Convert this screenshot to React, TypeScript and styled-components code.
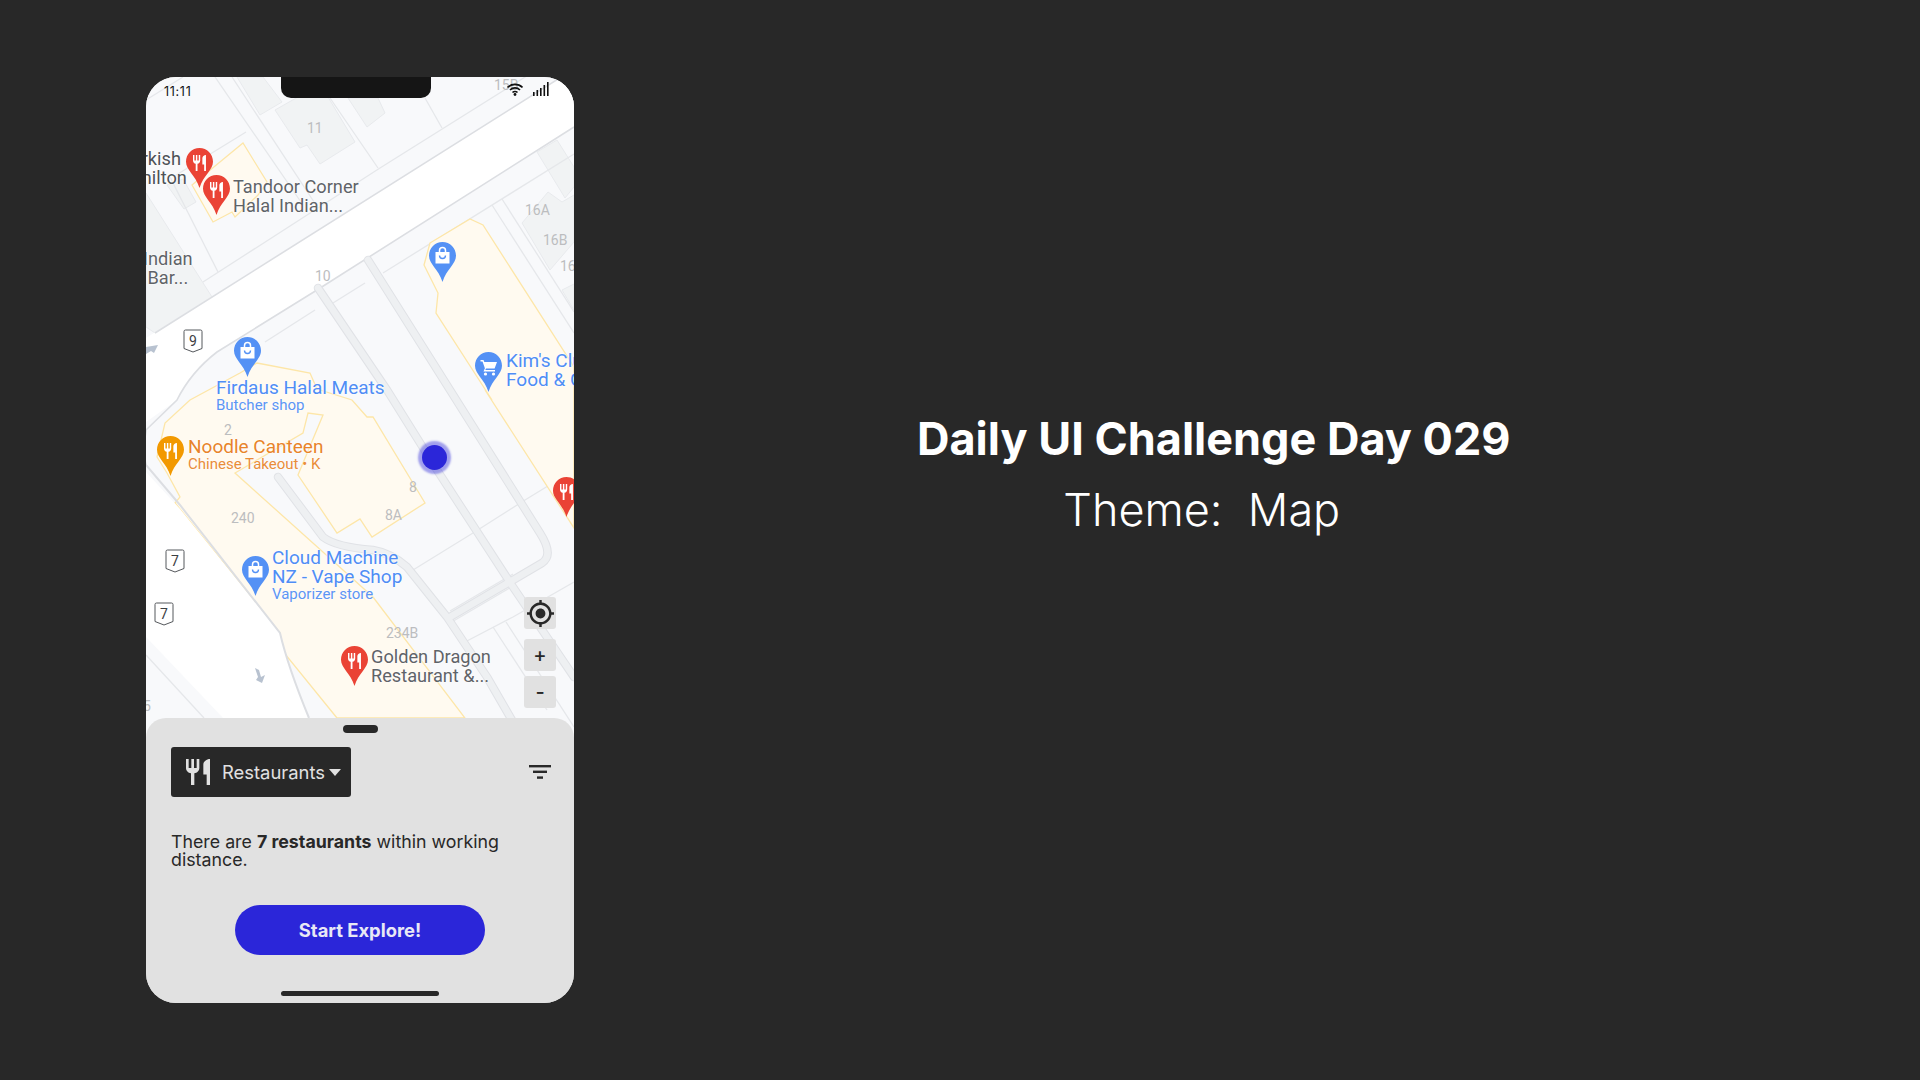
import React from 'react';
import styled, { createGlobalStyle } from 'styled-components';

const GlobalStyle = createGlobalStyle`
  html, body {
    margin: 0;
    padding: 0;
    background: #282828;
  }
`;

const Stage = styled.div`
  display: flex;
  align-items: flex-start;
  width: 1920px;
  height: 1080px;
  overflow: hidden;
  background: #282828;
`;

const Phone = styled.div`
  position: relative;
  display: flex;
  flex-direction: column;
  flex: none;
  width: 428px;
  height: 926px;
  margin: 77px 0 0 146px;
  border-radius: 30px;
  overflow: hidden;
  background: #e1e1e1;
`;

const MapArea = styled.div`
  position: relative;
  width: 428px;
  height: 660px;
  margin-bottom: -19px;
  overflow: hidden;
  background: #f8f9fb;
`;

const MapLayer = styled.svg`
  display: block;
`;

const Notch = styled.div`
  position: absolute;
  top: 0;
  left: 135px;
  width: 150px;
  height: 21px;
  border-radius: 0 0 10px 10px;
  background: #151515;
`;

const StatusTime = styled.span`
  position: absolute;
  top: 7px;
  left: 18px;
  font: 400 12.5px/15px 'Inter', sans-serif;
  letter-spacing: 0.7px;
  color: #111;
`;

const StatusIcons = styled.div`
  position: absolute;
  top: 5px;
  right: 24px;
  display: flex;
  align-items: flex-end;
  gap: 10px;
`;

const Label = styled.div<{ $x: number; $y: number; $color: string; $size?: number }>`
  position: absolute;
  left: ${(p) => p.$x}px;
  top: ${(p) => p.$y}px;
  font: 400 ${(p) => p.$size ?? 18.2}px/19px 'Roboto', sans-serif;
  color: ${(p) => p.$color};
  white-space: pre;
  text-shadow: 0 0 2px #fff, 0 0 2px #fff;
`;

const SubLabel = styled.div`
  margin-top: 1px;
  font-size: 15px;
  line-height: 15px;
  opacity: 0.92;
`;

const Num = styled.span<{ $x: number; $y: number }>`
  position: absolute;
  left: ${(p) => p.$x}px;
  top: ${(p) => p.$y}px;
  font: 400 14px/15px 'Roboto', sans-serif;
  color: #bcbdbf;
`;

const PinBox = styled.svg<{ $x: number; $y: number }>`
  position: absolute;
  left: ${(p) => p.$x}px;
  top: ${(p) => p.$y}px;
`;

const Dot = styled.div`
  position: absolute;
  left: 275.5px;
  top: 367.5px;
  width: 25px;
  height: 25px;
  border-radius: 50%;
  background: #2b26d9;
  box-shadow: 0 0 2px 4px rgba(43, 38, 217, 0.42);
`;

const Controls = styled.div`
  position: absolute;
  right: 18px;
  top: 520px;
  display: flex;
  flex-direction: column;
  width: 32px;
`;

const ControlButton = styled.div<{ $gap?: number }>`
  display: flex;
  align-items: center;
  justify-content: center;
  width: 32px;
  height: 32px;
  margin-top: ${(p) => p.$gap ?? 0}px;
  border-radius: 3px;
  background: #e1e1e1;
  font: 500 20px/1 'Inter', sans-serif;
  color: #282828;
`;

const Sheet = styled.div`
  position: relative;
  display: flex;
  flex-direction: column;
  height: 285px;
  padding: 7px 25px 0;
  box-sizing: border-box;
  border-radius: 20px 20px 0 0;
  background: #e1e1e1;
`;

const Handle = styled.div`
  align-self: center;
  width: 35px;
  height: 8px;
  border-radius: 4px;
  background: #282828;
`;

const FilterRow = styled.div`
  display: flex;
  align-items: center;
  justify-content: space-between;
  margin: 14px -2px 0 0;
`;

const Dropdown = styled.div`
  display: flex;
  align-items: center;
  width: 180px;
  height: 50px;
  padding-left: 15px;
  box-sizing: border-box;
  border-radius: 3px;
  background: #282828;
  color: #e1e1e1;
  font: 400 18.4px/20px 'Inter', sans-serif;
`;

const DropdownText = styled.span`
  margin-left: 12px;
`;

const Caret = styled.span`
  width: 0;
  height: 0;
  margin-left: 4px;
  border-left: 6px solid transparent;
  border-right: 6px solid transparent;
  border-top: 7px solid #e1e1e1;
`;

const Summary = styled.p`
  margin: 36px 0 0;
  font: 400 17.8px/18px 'Inter', sans-serif;
  color: #282828;
  b {
    font-weight: 700;
  }
`;

const Explore = styled.button`
  align-self: center;
  width: 250px;
  height: 50px;
  margin-top: 36px;
  border: 0;
  border-radius: 25px;
  background: #2b26d9;
  color: #e8e8f5;
  font: 700 18.4px/20px 'Inter', sans-serif;
`;

const HomeBar = styled.div`
  align-self: center;
  width: 158px;
  height: 5px;
  margin-top: 36px;
  border-radius: 3px;
  background: #282828;
`;

const Intro = styled.div`
  display: flex;
  flex-direction: column;
  align-items: center;
  margin: 409px 0 0 343px;
  color: #fff;
`;

const Title = styled.h1`
  margin: 0;
  font: 700 45px/60px 'Inter', sans-serif;
  white-space: nowrap;
`;

const Theme = styled.h2`
  margin: 11px 24px 0 0;
  font: 300 45px/60px 'Inter', sans-serif;
  white-space: pre;
`;

const PIN_PATH = 'M13.5 0C6 0 0 6 0 13.7C0 22 9.5 27 13.5 40C17.5 27 27 22 27 13.7C27 6 21 0 13.5 0Z';
const FORK_PATH = 'M11 9H9V2H7v7H5V2H3v7c0 2.12 1.66 3.84 3.75 3.97V22h2.5v-9.03C11.34 12.84 13 11.12 13 9V2h-2v7zm5-3v8h2.5v8H21V2c-2.76 0-5 2.24-5 4z';
const LOCATE_PATH = 'M12 8c-2.21 0-4 1.79-4 4s1.79 4 4 4 4-1.79 4-4-1.79-4-4-4zm8.94 3c-.46-4.17-3.77-7.48-7.94-7.94V1h-2v2.06C6.83 3.52 3.52 6.83 3.06 11H1v2h2.06c.46 4.17 3.77 7.48 7.94 7.94V23h2v-2.06c4.17-.46 7.48-3.77 7.94-7.94H23v-2h-2.06zM12 19c-3.87 0-7-3.13-7-7s3.13-7 7-7 7 3.13 7 7-3.13 7-7 7z';
const ROAD_PATH = 'M172,211 L241,313 L291,393 L367,510 L428,600 M222,183 L304,313 L394,456 Q408,478 396,486 L304,540 M132,400 L177,460 Q190,470 227,473 Q245,476 261,490 L301,540 L341,600 L367,645';

const RED = '#ea4335';
const BLUE = '#5491f5';
const ORANGE = '#f29900';
const LINK = '#4f8df5';

type PinKind = 'food' | 'bag' | 'cart';

const Pin = ({ x, y, color, kind }: { x: number; y: number; color: string; kind: PinKind }) => (
  <PinBox $x={x} $y={y} width="27" height="40" viewBox="0 0 27 40">
    <path d={PIN_PATH} fill={color} />
    {kind === 'food' && <path d={FORK_PATH} fill="#fff" transform="translate(4.84 5.4) scale(0.72 0.8)" />}
    {kind === 'bag' && (
      <g>
        <rect x="6.5" y="10" width="14" height="11.5" fill="#fff" />
        <path d="M10.5 10V8.5a3 3 0 0 1 6 0V10" fill="none" stroke="#fff" strokeWidth="1.5" />
        <path d="M10.5 13.5a3 3 0 0 0 6 0" fill="none" stroke={color} strokeWidth="1.4" />
      </g>
    )}
    {kind === 'cart' && (
      <g fill="#fff">
        <path d="M5.5 8h3l.8 2H22l-2.4 6.5H11l-.7 1.5H20v1.6H8.5l1.4-3.4L7.5 9.6h-2z" />
        <circle cx="10.5" cy="22" r="1.6" />
        <circle cx="18.5" cy="22" r="1.6" />
      </g>
    )}
  </PinBox>
);

const Shield = ({ x, y, value }: { x: number; y: number; value: string }) => (
  <PinBox $x={x} $y={y} width="20" height="24" viewBox="0 0 20 24">
    <path d="M2.5 1H17.5Q19 1 19 2.5V19.5L10 23L1 19.5V2.5Q1 1 2.5 1Z" fill="#fff" stroke="#55585c" strokeWidth="1" />
    <text x="10" y="16.5" textAnchor="middle" fontFamily="Roboto, sans-serif" fontSize="14" fill="#3c4043">{value}</text>
  </PinBox>
);

const BUILDINGS = [
  '0,116 66,220 9,256 0,250',
  '91,0 114,38 136,25 117,0',
  '129,33 154,71 161,68 174,87 209,65 182,20 159,16',
  '202,21 221,50 239,36 232,21',
  '376,146 402,115 416,125 428,118 428,165 404,193',
  '416,213 428,207 428,233',
  '21,108 38,132 50,125 37,102',
  '391,75 411,63 428,90 428,110 419,121',
];

const SHOPS = [
  '46,108 97,66 121,105 112,118 89,140 86,135 67,145',
  '284,166 324,142 337,148 428,290 428,451 339,313 346,323 290,236 292,216 278,188',
  '111,286 164,296 171,312 206,323 221,340 227,340 279,426 226,460 214,442 191,456 152,398 177,338 162,336 157,356 89,396 227,520 319,641 191,641 126,561 134,556 29,426 34,420 21,396 11,380 19,346 44,323 94,296',
];

const THIN_LINES = [
  '69,0 157,128',
  '86,0 170,128',
  '0,23 37,0',
  '100,55 27,100',
  '24,100 72,195',
  '57,205 234,91 403,-15',
  '346,128 428,256',
  '356,122 428,235',
  '267,493 327,456 379,423 428,393',
  '304,534 367,497',
  '304,546 367,509',
  '319,565 367,540 428,505',
  '347,550 401,633',
  '360,545 428,650',
  '0,560 77,641',
  '18,640 44,620',
  '279,21 296,51',
  '184,21 232,91',
  '428,77 237,196',
  '219,206 187,226',
  '169,233 119,265',
];

const App: React.FC = () => (
  <Stage>
    <GlobalStyle />
    <Phone>
      <MapArea>
        <MapLayer width="428" height="660" viewBox="0 0 428 660">
          {BUILDINGS.map((b) => <polygon key={b} points={b} fill="#f1f3f4" stroke="#e8eaed" />)}
          {THIN_LINES.map((l) => <polyline key={l} points={l} fill="none" stroke="#e5e7ea" strokeWidth="1.3" />)}
          {SHOPS.map((s) => <polygon key={s} points={s} fill="#fffaf0" stroke="#fde6a8" strokeWidth="1.3" />)}
          <path d="M428,-8 L0,261 V345 L31,323 Q45,295 71,275 L171,213 L428,50Z" fill="#fff" />
          <path d="M428,-8 L9,256 M428,50 L171,213 L71,275 Q45,295 31,323 L0,353" fill="none" stroke="#dcdee2" strokeWidth="1.6" />
          <path d="M0,395 L34,432 L134,556 Q142,590 163,641 L0,641Z" fill="#fff" />
          <path d="M0,560 L77,641 H0Z" fill="#f8f9fb" />
          <path d="M0,388 L34,428 L134,556 Q142,590 163,641" fill="none" stroke="#dcdee2" strokeWidth="2" />
          <path d="M0,353 Q-4,375 0,388" fill="none" stroke="#dcdee2" strokeWidth="2" />
          <path d="M0,578 L58,641" fill="none" stroke="#e5e7ea" strokeWidth="1.3" />
          <g fill="none" strokeLinecap="round" strokeLinejoin="round">
            <path d={ROAD_PATH} stroke="#e0e2e6" strokeWidth="8.5" />
            <path d={ROAD_PATH} stroke="#eef0f2" strokeWidth="6.5" />
          </g>
          <polygon points="0,270 12,268 8,276 5,274 0,277" fill="#b8c2d0" />
          <polygon points="109,591 113,593 115,600 119,598 116,606 110,603 112,600" fill="#b8c2d0" />
        </MapLayer>

        <Num $x={161} $y={44}>11</Num>
        <Num $x={348} $y={1}>15B</Num>
        <Num $x={379} $y={126}>16A</Num>
        <Num $x={397} $y={156}>16B</Num>
        <Num $x={414} $y={182}>16</Num>
        <Num $x={169} $y={192}>10</Num>
        <Num $x={78} $y={346}>2</Num>
        <Num $x={85} $y={434}>240</Num>
        <Num $x={263} $y={403}>8</Num>
        <Num $x={239} $y={431}>8A</Num>
        <Num $x={240} $y={549}>234B</Num>
        <Num $x={-3} $y={622}>5</Num>

        <Shield x={37} y={252} value="9" />
        <Shield x={19} y={472} value="7" />
        <Shield x={8} y={525} value="7" />

        <Label $x={-33} $y={72} $color="#4d5156">{'  Turkish\nHamilton'}</Label>
        <Label $x={87} $y={100} $color="#5f6368">{'Tandoor Corner\nHalal Indian...'}</Label>
        <Label $x={-3} $y={172} $color="#5f6368">{'Indian\n Bar...'}</Label>
        <Label $x={360} $y={274} $size={19} $color={LINK}>{"Kim's Club\nFood & Grocery"}</Label>
        <Label $x={70} $y={301} $size={19} $color={LINK}>
          Firdaus Halal Meats
          <SubLabel>Butcher shop</SubLabel>
        </Label>
        <Label $x={42} $y={360} $size={19} $color="#e8842a">
          Noodle Canteen
          <SubLabel>Chinese Takeout • K</SubLabel>
        </Label>
        <Label $x={126} $y={471} $size={19} $color={LINK}>
          {'Cloud Machine\nNZ - Vape Shop'}
          <SubLabel>Vaporizer store</SubLabel>
        </Label>
        <Label $x={225} $y={570} $color="#5f6368">{'Golden Dragon\nRestaurant &...'}</Label>

        <Pin x={40} y={71} color={RED} kind="food" />
        <Pin x={57} y={98} color={RED} kind="food" />
        <Pin x={283} y={165} color={BLUE} kind="bag" />
        <Pin x={88} y={260} color={BLUE} kind="bag" />
        <Pin x={329} y={275} color={BLUE} kind="cart" />
        <Pin x={11} y={359} color={ORANGE} kind="food" />
        <Pin x={407} y={400} color={RED} kind="food" />
        <Pin x={96} y={479} color={BLUE} kind="bag" />
        <Pin x={195} y={569} color={RED} kind="food" />

        <Dot />

        <Controls>
          <ControlButton>
            <svg width="27" height="27" viewBox="1 1 22 22"><path d={LOCATE_PATH} fill="#282828" /></svg>
          </ControlButton>
          <ControlButton $gap={10}>+</ControlButton>
          <ControlButton $gap={5}>-</ControlButton>
        </Controls>

        <StatusTime>11:11</StatusTime>
        <StatusIcons>
          <svg width="16" height="13" viewBox="0 0 16 13">
            <path d="M0.5 4.5A10.5 10.5 0 0 1 15.5 4.5M3 7A7 7 0 0 1 13 7M5.5 9.5A3.5 3.5 0 0 1 10.5 9.5" fill="none" stroke="#111" strokeWidth="1.6" />
            <circle cx="8" cy="11.5" r="1.4" fill="#111" />
          </svg>
          <svg width="17" height="14" viewBox="0 0 17 14" fill="#111">
            <rect x="0" y="10" width="1.6" height="4" />
            <rect x="3.5" y="8" width="1.6" height="6" />
            <rect x="7" y="6" width="1.6" height="8" />
            <rect x="10.5" y="3" width="1.6" height="11" />
            <rect x="14" y="0" width="1.6" height="14" />
          </svg>
        </StatusIcons>
        <Notch />
      </MapArea>

      <Sheet>
        <Handle />
        <FilterRow>
          <Dropdown>
            <svg width="24" height="26" viewBox="3 2 18 20" preserveAspectRatio="none"><path d={FORK_PATH} fill="#e1e1e1" /></svg>
            <DropdownText>Restaurants</DropdownText>
            <Caret />
          </Dropdown>
          <svg width="22" height="14" viewBox="0 0 22 14" fill="#282828">
            <rect x="0" y="0" width="22" height="2.4" />
            <rect x="4" y="5.6" width="14" height="2.4" />
            <rect x="8" y="11.4" width="6" height="2.4" />
          </svg>
        </FilterRow>
        <Summary>There are <b>7 restaurants</b> within working distance.</Summary>
        <Explore>Start Explore!</Explore>
        <HomeBar />
      </Sheet>
    </Phone>

    <Intro>
      <Title>Daily UI Challenge Day 029</Title>
      <Theme>{'Theme:  Map'}</Theme>
    </Intro>
  </Stage>
);

export default App;
